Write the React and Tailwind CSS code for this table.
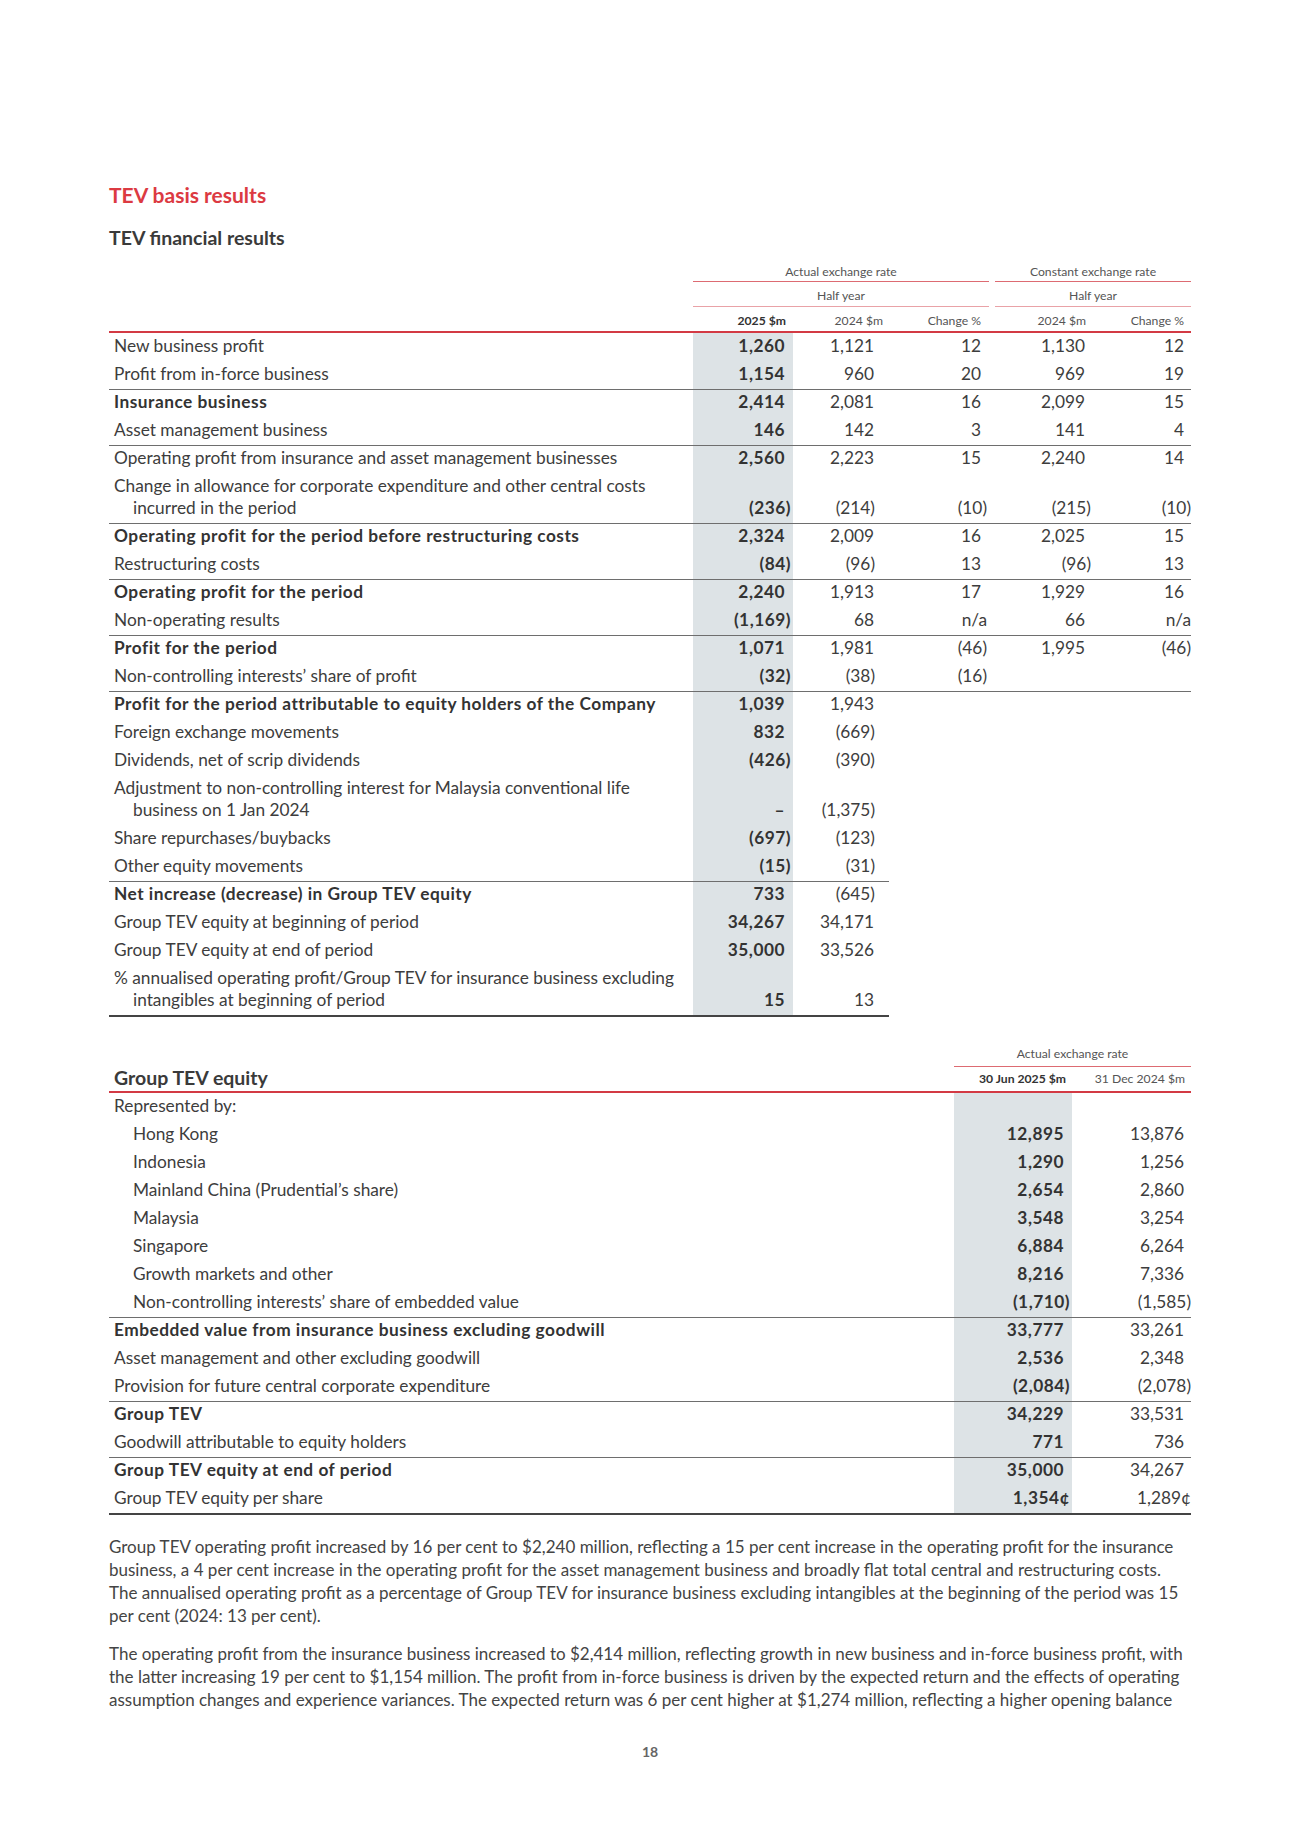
import React from "react";

const T1 = [
  { l: ["New business profit"], v: ["1,260", "1,121", "12", "1,130", "12"] },
  { l: ["Profit from in-force business"], v: ["1,154", "960", "20", "969", "19"] },
  { l: ["Insurance business"], v: ["2,414", "2,081", "16", "2,099", "15"], bold: true, b: "full" },
  { l: ["Asset management business"], v: ["146", "142", "3", "141", "4"] },
  { l: ["Operating profit from insurance and asset management businesses"], v: ["2,560", "2,223", "15", "2,240", "14"], b: "full" },
  { l: ["Change in allowance for corporate expenditure and other central costs", "incurred in the period"], v: ["(236)", "(214)", "(10)", "(215)", "(10)"] },
  { l: ["Operating profit for the period before restructuring costs"], v: ["2,324", "2,009", "16", "2,025", "15"], bold: true, b: "full" },
  { l: ["Restructuring costs"], v: ["(84)", "(96)", "13", "(96)", "13"] },
  { l: ["Operating profit for the period"], v: ["2,240", "1,913", "17", "1,929", "16"], bold: true, b: "full" },
  { l: ["Non-operating results"], v: ["(1,169)", "68", "n/a", "66", "n/a"] },
  { l: ["Profit for the period"], v: ["1,071", "1,981", "(46)", "1,995", "(46)"], bold: true, b: "full" },
  { l: ["Non-controlling interests\u2019 share of profit"], v: ["(32)", "(38)", "(16)", "", ""] },
  { l: ["Profit for the period attributable to equity holders of the Company"], v: ["1,039", "1,943", "", "", ""], bold: true, b: "full" },
  { l: ["Foreign exchange movements"], v: ["832", "(669)", "", "", ""] },
  { l: ["Dividends, net of scrip dividends"], v: ["(426)", "(390)", "", "", ""] },
  { l: ["Adjustment to non-controlling interest for Malaysia conventional life", "business on 1 Jan 2024"], v: ["\u2013", "(1,375)", "", "", ""] },
  { l: ["Share repurchases/buybacks"], v: ["(697)", "(123)", "", "", ""] },
  { l: ["Other equity movements"], v: ["(15)", "(31)", "", "", ""] },
  { l: ["Net increase (decrease) in Group TEV equity"], v: ["733", "(645)", "", "", ""], bold: true, b: "short" },
  { l: ["Group TEV equity at beginning of period"], v: ["34,267", "34,171", "", "", ""] },
  { l: ["Group TEV equity at end of period"], v: ["35,000", "33,526", "", "", ""] },
  { l: ["% annualised operating profit/Group TEV for insurance business excluding", "intangibles at beginning of period"], v: ["15", "13", "", "", ""] },
];

const T2 = [
  { l: "Represented by:", v: ["", ""] },
  { l: "Hong Kong", v: ["12,895", "13,876"], ind: true },
  { l: "Indonesia", v: ["1,290", "1,256"], ind: true },
  { l: "Mainland China (Prudential\u2019s share)", v: ["2,654", "2,860"], ind: true },
  { l: "Malaysia", v: ["3,548", "3,254"], ind: true },
  { l: "Singapore", v: ["6,884", "6,264"], ind: true },
  { l: "Growth markets and other", v: ["8,216", "7,336"], ind: true },
  { l: "Non-controlling interests\u2019 share of embedded value", v: ["(1,710)", "(1,585)"], ind: true },
  { l: "Embedded value from insurance business excluding goodwill", v: ["33,777", "33,261"], bold: true, b: true },
  { l: "Asset management and other excluding goodwill", v: ["2,536", "2,348"] },
  { l: "Provision for future central corporate expenditure", v: ["(2,084)", "(2,078)"] },
  { l: "Group TEV", v: ["34,229", "33,531"], bold: true, b: true },
  { l: "Goodwill attributable to equity holders", v: ["771", "736"] },
  { l: "Group TEV equity at end of period", v: ["35,000", "34,267"], bold: true, b: true },
  { l: "Group TEV equity per share", v: ["1,354\u00a2", "1,289\u00a2"] },
];

const hangs = (v) => v.endsWith(")") || v.endsWith("\u00a2") || v === "n/a";

const BT = "border-t border-[#6e6e6e]";
const BOLD = "font-bold text-[#333333] tracking-[0.5px]";

function Row1({ r }) {
  const h = r.l.length > 1 ? "h-[50px]" : "h-[28px]";
  const lineA = r.b === "full" || r.b === "short" ? BT : "";
  const lineB = r.b === "full" ? BT : "";
  const v = r.v;
  return (
    <div className={`flex ${h}`}>
      <div className={`w-[584px] flex flex-col justify-end pb-[4px] pl-[5px] ${lineA} ${r.bold ? BOLD : ""}`}>
        <div className="whitespace-nowrap">{r.l[0]}</div>
        {r.l[1] && <div className="whitespace-nowrap pl-[19px]">{r.l[1]}</div>}
      </div>
      <div className={`w-[100px] bg-[#dde3e6] flex items-end justify-end pb-[4px] ${BOLD} ${lineA} ${hangs(v[0]) ? "pr-[2px]" : "pr-[8px]"}`}>{v[0]}</div>
      <div className={`w-[96px] flex items-end justify-end pb-[4px] ${lineA} ${hangs(v[1]) ? "pr-[14px]" : "pr-[15px]"}`}>{v[1]}</div>
      <div className={`w-[100px] flex items-end justify-end pb-[4px] ${lineB} ${hangs(v[2]) ? "pr-[2px]" : "pr-[8px]"}`}>{v[2]}</div>
      <div className={`w-[6px] ${lineB}`}></div>
      <div className={`w-[98px] flex items-end justify-end pb-[4px] ${lineB} ${hangs(v[3]) ? "pr-[2px]" : "pr-[8px]"}`}>{v[3]}</div>
      <div className={`w-[98px] flex items-end justify-end pb-[4px] ${lineB} ${hangs(v[4]) ? "pr-0" : "pr-[7px]"}`}>{v[4]}</div>
    </div>
  );
}

function Row2({ r }) {
  const line = r.b ? BT : "";
  return (
    <div className={`flex h-[28px] ${line}`}>
      <div className={`w-[845px] flex flex-col justify-end pb-[4px] ${r.ind ? "pl-[24px]" : "pl-[5px]"} ${r.bold ? BOLD : ""}`}>
        <div className="whitespace-nowrap">{r.l}</div>
      </div>
      <div className={`w-[118px] bg-[#dde3e6] flex items-end justify-end pb-[4px] ${BOLD} ${hangs(r.v[0]) ? "pr-[2px]" : "pr-[8px]"}`}>{r.v[0]}</div>
      <div className={`w-[119px] flex items-end justify-end pb-[4px] ${hangs(r.v[1]) ? "pr-0" : "pr-[7px]"}`}>{r.v[1]}</div>
    </div>
  );
}

export default function App() {
  return (
    <div className="w-[1300px] min-h-[1839px] bg-white font-[family-name:Lato,sans-serif] text-[#3d3d3d] flex flex-col">
      <div className="px-[109px] pt-[181px]">
        <h1 className="text-[21px] leading-[28px] font-bold text-[#dc3a42]">TEV basis results</h1>
        <h2 className="mt-[17px] text-[19.5px] leading-[24px] font-bold text-[#3a3a3a]">TEV financial results</h2>

        {/* Table 1 header */}
        <div className="mt-[8px] flex text-[12.2px] text-[#555555]">
          <div className="w-[584px]"></div>
          <div className="flex-1 flex flex-col">
            <div className="flex gap-[6px] h-[24px]">
              <div className="w-[296px] flex items-center justify-center pt-[5px] border-b border-[#dd6b72]">Actual exchange rate</div>
              <div className="w-[196px] flex items-center justify-center pt-[5px] border-b border-[#dd6b72]">Constant exchange rate</div>
            </div>
            <div className="flex gap-[6px] h-[25px]">
              <div className="w-[296px] flex items-center justify-center pt-[5px] border-b border-[#e9a2a7]">Half year</div>
              <div className="w-[196px] flex items-center justify-center pt-[5px] border-b border-[#e9a2a7]">Half year</div>
            </div>
          </div>
        </div>
        <div className="flex h-[26px] pt-[4px] text-[12.2px] text-[#555555] border-b-[2px] border-[#d33a44]">
          <div className="w-[584px]"></div>
          <div className="w-[100px] flex items-center justify-end pr-[7px] font-bold text-[#333333]">2025 $m</div>
          <div className="w-[96px] flex items-center justify-end pr-[6px]">2024 $m</div>
          <div className="w-[100px] flex items-center justify-end pr-[8px]">Change %</div>
          <div className="w-[6px]"></div>
          <div className="w-[98px] flex items-center justify-end pr-[7px]">2024 $m</div>
          <div className="w-[98px] flex items-center justify-end pr-[7px]">Change %</div>
        </div>

        {/* Table 1 body */}
        <div className="text-[17.3px] leading-[22px]">
          {T1.map((r, i) => (
            <Row1 key={i} r={r} />
          ))}
          <div className="w-[780px] h-[2px] bg-[#444444]"></div>
        </div>

        {/* Table 2 header */}
        <div className="mt-[26px] flex text-[12.2px] text-[#555555] h-[24px]">
          <div className="w-[845px]"></div>
          <div className="w-[237px] flex items-center justify-center border-b border-[#dd6b72]">Actual exchange rate</div>
        </div>
        <div className="flex h-[26px] border-b-[2px] border-[#d33a44]">
          <div className="w-[845px] flex items-center pl-[5px] pb-[3px] text-[19.5px] font-bold text-[#3a3a3a]">Group TEV equity</div>
          <div className="w-[118px] flex items-center justify-end pr-[6px] text-[12.2px] font-bold text-[#333333]">30 Jun 2025 $m</div>
          <div className="w-[119px] flex items-center justify-end pr-[6px] text-[12.2px] text-[#555555]">31 Dec 2024 $m</div>
        </div>
        <div className="text-[17.3px] leading-[22px]">
          {T2.map((r, i) => (
            <Row2 key={i} r={r} />
          ))}
          <div className="w-full h-[2px] bg-[#444444]"></div>
        </div>

        {/* Paragraphs */}
        <div className="mt-[20px] text-[17px] leading-[23px] text-[#444444]">
          <p className="whitespace-nowrap">
            Group TEV operating profit increased by 16 per cent to $2,240 million, reflecting a 15 per cent increase in the operating profit for the insurance
            <br />
            business, a 4 per cent increase in the operating profit for the asset management business and broadly flat total central and restructuring costs.
            <br />
            The annualised operating profit as a percentage of Group TEV for insurance business excluding intangibles at the beginning of the period was 15
            <br />
            per cent (2024: 13 per cent).
          </p>
          <p className="mt-[15px] whitespace-nowrap">
            The operating profit from the insurance business increased to $2,414 million, reflecting growth in new business and in-force business profit, with
            <br />
            the latter increasing 19 per cent to $1,154 million. The profit from in-force business is driven by the expected return and the effects of operating
            <br />
            assumption changes and experience variances. The expected return was 6 per cent higher at $1,274 million, reflecting a higher opening balance
          </p>
        </div>

        <div className="mt-[31px] text-center text-[14px] leading-[20px] font-bold text-[#666666]">18</div>
      </div>
    </div>
  );
}
